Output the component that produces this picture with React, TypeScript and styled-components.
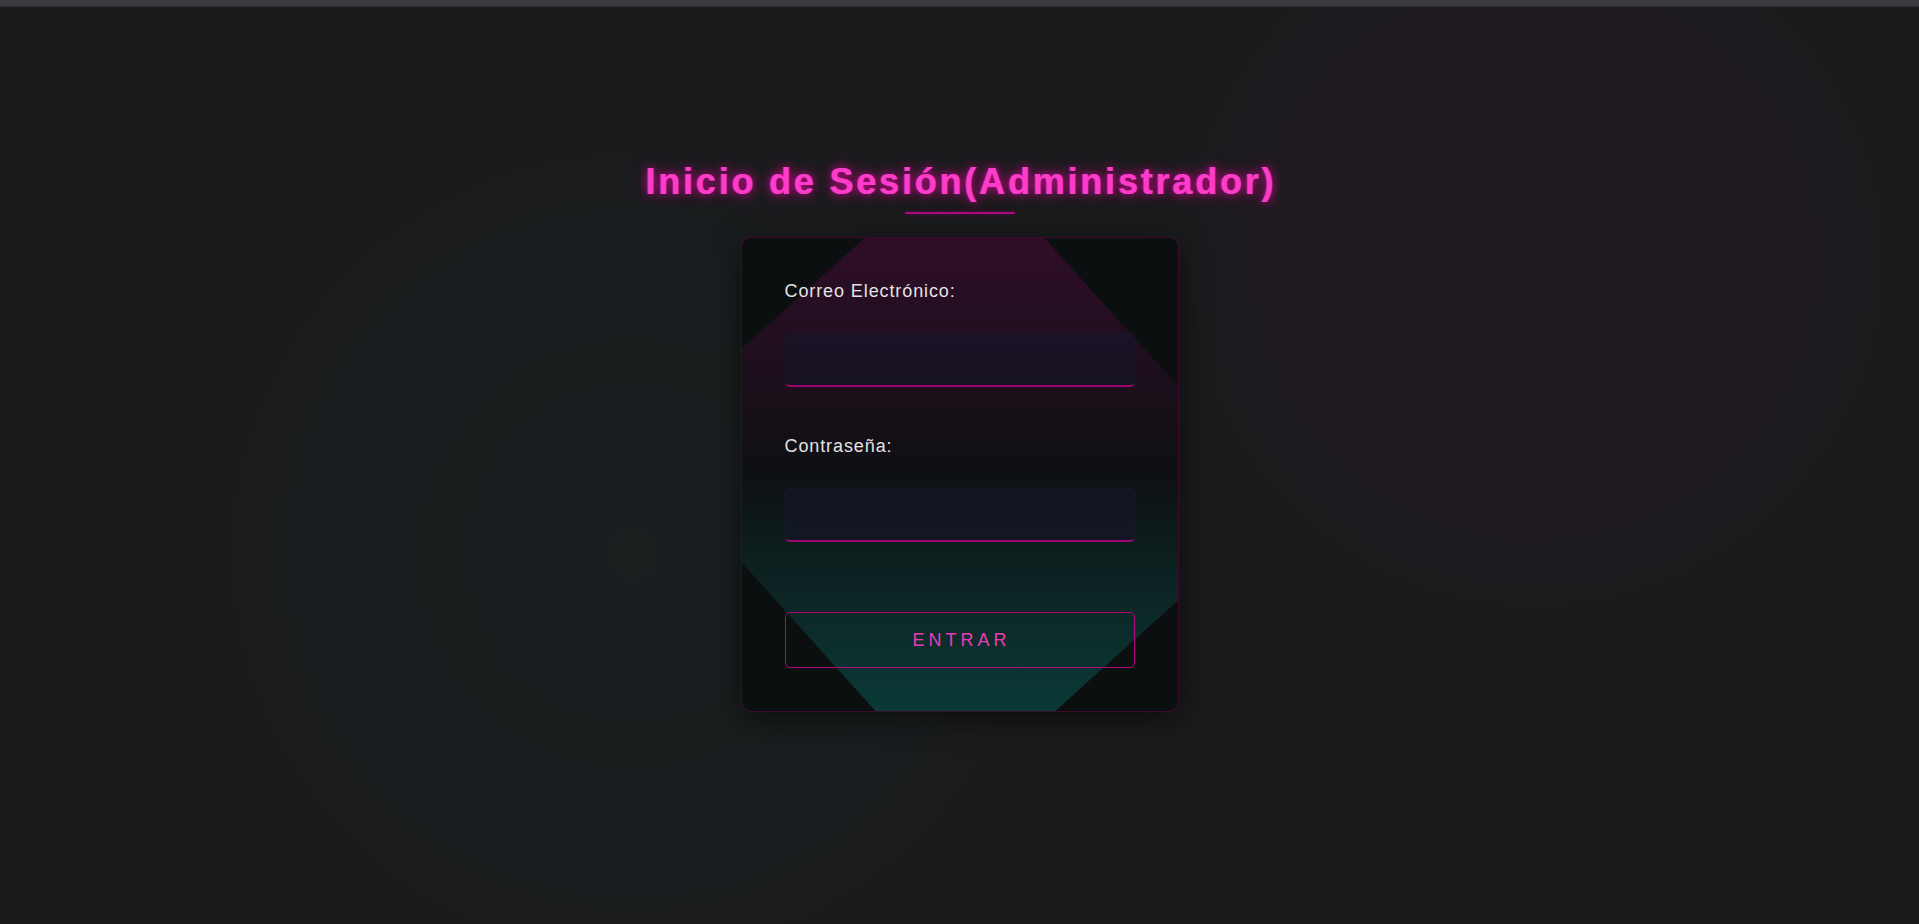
import React from "react";
import styled, { createGlobalStyle } from "styled-components";

const GlobalStyle = createGlobalStyle`
  html, body {
    margin: 0;
    padding: 0;
    height: 100%;
  }
  body {
    background: #1a1b1d;
    font-family: "Liberation Sans", Arial, sans-serif;
  }
  #root {
    min-height: 100vh;
  }
  *, *::before, *::after {
    box-sizing: border-box;
  }
`;

const Page = styled.div`
  min-height: 100vh;
  display: flex;
  flex-direction: column;
  background:
    radial-gradient(circle 380px at 80% 28%, rgba(255, 0, 170, 0.024) 0%, rgba(255, 0, 170, 0.02) 72%, rgba(255, 0, 170, 0) 100%),
    radial-gradient(circle 420px at 33% 60%, rgba(0, 255, 200, 0.014) 0%, rgba(0, 255, 200, 0.01) 72%, rgba(0, 255, 200, 0) 100%),
    #1a1b1d;
`;

const TopBar = styled.div`
  flex-shrink: 0;
  height: 7px;
  background: #3c3b42;
  border-bottom: 1px solid #2b2b30;
`;

const Main = styled.main`
  display: flex;
  flex-direction: column;
  align-items: center;
  padding-top: 153px;
`;

const Title = styled.h1`
  margin: 0;
  padding-left: 2.8px;
  font-size: 36px;
  line-height: 44px;
  font-weight: 700;
  letter-spacing: 2.8px;
  color: #ff3cc9;
  text-shadow:
    -1px 0 rgba(255, 40, 110, 0.45),
    1px 0 rgba(130, 70, 255, 0.45),
    0 0 8px rgba(255, 0, 170, 0.75),
    0 0 18px rgba(255, 0, 170, 0.4);
`;

const Underline = styled.div`
  width: 110px;
  height: 2px;
  margin-top: 8px;
  background: #b3087f;
  box-shadow: 0 0 4px rgba(255, 0, 170, 0.3);
`;

const Card = styled.form`
  position: relative;
  isolation: isolate;
  overflow: hidden;
  margin-top: 23px;
  width: 438px;
  padding: 42px 43px 43px;
  background: #0c0f10;
  border: 1px solid rgba(255, 0, 170, 0.2);
  border-radius: 10px;
  box-shadow: 0 8px 32px rgba(0, 0, 0, 0.55);
`;

const Glow = styled.div`
  position: absolute;
  inset: -3px;
  z-index: -1;
  pointer-events: none;
  transform: rotate(-42deg);
  background: linear-gradient(222deg, #3c0c31 0%, #0e1012 50%, #094944 100%);
`;

const Field = styled.div<{ $gap: number }>`
  margin-bottom: ${(p) => p.$gap}px;
`;

const Label = styled.label`
  display: block;
  margin-bottom: 31px;
  color: #e2e2e2;
  font-size: 18px;
  line-height: 22px;
  letter-spacing: 0.9px;
`;

const Input = styled.input`
  display: block;
  width: 100%;
  height: 54px;
  padding: 0 14px;
  background: rgba(22, 22, 42, 0.6);
  border: 1px solid rgba(255, 255, 255, 0.02);
  border-bottom: 2px solid #9c0572;
  border-radius: 5px;
  color: #e2e2e2;
  font-family: inherit;
  font-size: 16px;
  outline: none;
`;

const Button = styled.button`
  display: block;
  width: 100%;
  height: 56px;
  padding: 0 0 0 4px;
  background: transparent;
  border: 1px solid #b0077c;
  border-radius: 5px;
  color: #ee3bb5;
  font-family: inherit;
  font-size: 18px;
  letter-spacing: 4px;
  text-transform: uppercase;
  cursor: pointer;
`;

export default function App() {
  return (
    <>
      <GlobalStyle />
      <Page>
        <TopBar />
        <Main>
          <Title>Inicio de Sesión(Administrador)</Title>
          <Underline />
          <Card onSubmit={(e) => e.preventDefault()}>
            <Glow />
            <Field $gap={48}>
              <Label htmlFor="email">Correo Electrónico:</Label>
              <Input id="email" type="email" />
            </Field>
            <Field $gap={70}>
              <Label htmlFor="password">Contraseña:</Label>
              <Input id="password" type="password" />
            </Field>
            <Button type="submit">Entrar</Button>
          </Card>
        </Main>
      </Page>
    </>
  );
}
